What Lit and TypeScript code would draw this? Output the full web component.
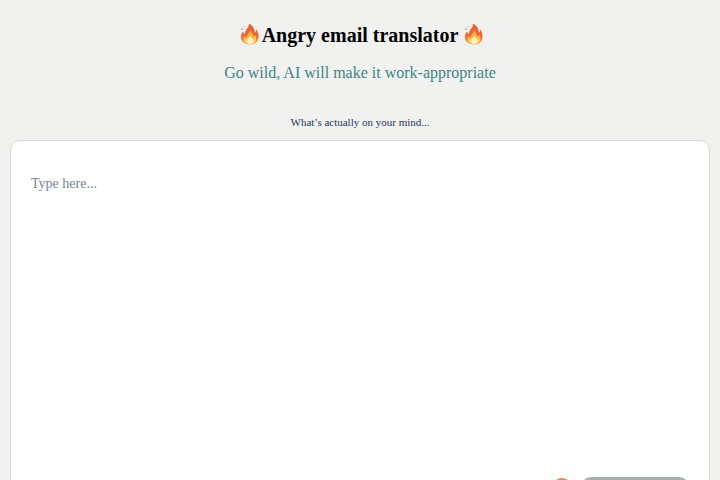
import { LitElement, html, css } from "lit";
import { customElement } from "lit/decorators.js";

@customElement("flame-icon")
class FlameIcon extends LitElement {
  static styles = css`
    :host {
      display: inline-flex;
      flex: none;
      width: 20px;
      height: 22px;
    }
    svg {
      width: 100%;
      height: 100%;
    }
  `;

  render() {
    return html`
      <svg viewBox="0 0 40 44" aria-hidden="true">
        <defs>
          <linearGradient id="outer" x1="0" y1="0" x2="0" y2="1">
            <stop offset="0" stop-color="#e4603c" />
            <stop offset="0.55" stop-color="#f0652f" />
            <stop offset="1" stop-color="#f7a545" />
          </linearGradient>
          <linearGradient id="inner" x1="0" y1="0" x2="0" y2="1">
            <stop offset="0" stop-color="#f9923a" />
            <stop offset="0.55" stop-color="#fcbc4a" />
            <stop offset="1" stop-color="#fff0a0" />
          </linearGradient>
        </defs>
        <path
          fill="url(#outer)"
          d="M18 1C25 4 29 11 30 19C32 18 32 15 32 12C36 18 38 24 37 30C36 38 29 43 20 43C11 43 3 38 2 30C1 25 3 21 6 17C7 20 8 22 10 23C9 13 19 10 18 1Z"
        />
        <path
          fill="url(#inner)"
          d="M20 13C22 19 27 22 27 28C29 27 30 25 30 23C34 29 33 35 29 39C26 42 14 42 10 38C6 34 7 29 9 26C10 29 12 30 14 30C13 22 20 20 20 13Z"
        />
        <path
          fill="#fff3b4"
          d="M20 25C21 30 25 31 26 35C27 39 24 42 20 42C15 42 13 38 14 35C15 32 20 30 20 25Z"
        />
        <circle cx="4" cy="12" r="1.6" fill="#f0633a" />
        <circle cx="8" cy="7" r="1" fill="#f0633a" />
      </svg>
    `;
  }
}

@customElement("app-root")
class AppRoot extends LitElement {
  static styles = css`
    :host {
      display: block;
      box-sizing: border-box;
      height: 100vh;
      overflow: hidden;
      background: #f1f2f0;
      font-family: "Liberation Serif", "Times New Roman", serif;
    }
    main {
      display: flex;
      flex-direction: column;
      padding: 23px 10px;
    }
    h1 {
      display: flex;
      justify-content: center;
      gap: 6px;
      margin: 0;
      padding-left: 4px;
      font-size: 20px;
      line-height: 24px;
      color: #000;
    }
    .title {
      display: flex;
      gap: 2px;
    }
    .subtitle {
      margin: 17px 0 0;
      font-size: 16px;
      line-height: 18px;
      text-align: center;
      color: #3d8583;
    }
    label {
      margin-top: 34px;
      font-size: 11px;
      line-height: 12px;
      text-align: center;
      color: #2b3358;
    }
    .card {
      margin-top: 12px;
      padding: 33px 20px 20px;
      border: 1px solid #d9dad8;
      border-radius: 10px;
      background: #fff;
    }
    textarea {
      display: block;
      box-sizing: border-box;
      width: 100%;
      height: 287px;
      padding: 0;
      border: 0;
      outline: 0;
      resize: none;
      background: none;
      font: inherit;
      font-size: 14px;
      line-height: 20px;
      color: #2b3358;
    }
    textarea::placeholder {
      color: #75849a;
      opacity: 1;
    }
    .actions {
      display: flex;
      justify-content: flex-end;
      align-items: center;
      gap: 10px;
      margin-top: 16px;
    }
    .face {
      width: 18px;
      height: 36px;
    }
    button {
      width: 108px;
      height: 36px;
      border: 0;
      border-radius: 10px;
      background: #a8b0ae;
    }
  `;

  render() {
    return html`
      <main>
        <h1>
          <span class="title"><flame-icon></flame-icon>Angry email translator</span>
          <flame-icon></flame-icon>
        </h1>
        <p class="subtitle">Go wild, AI will make it work-appropriate</p>
        <label for="message">What’s actually on your mind...</label>
        <div class="card">
          <textarea id="message" placeholder="Type here..."></textarea>
          <div class="actions">
            <svg class="face" viewBox="0 0 18 36" aria-hidden="true">
              <circle cx="9" cy="10" r="9" fill="#e58a4e" />
            </svg>
            <button type="button"></button>
          </div>
        </div>
      </main>
    `;
  }
}
